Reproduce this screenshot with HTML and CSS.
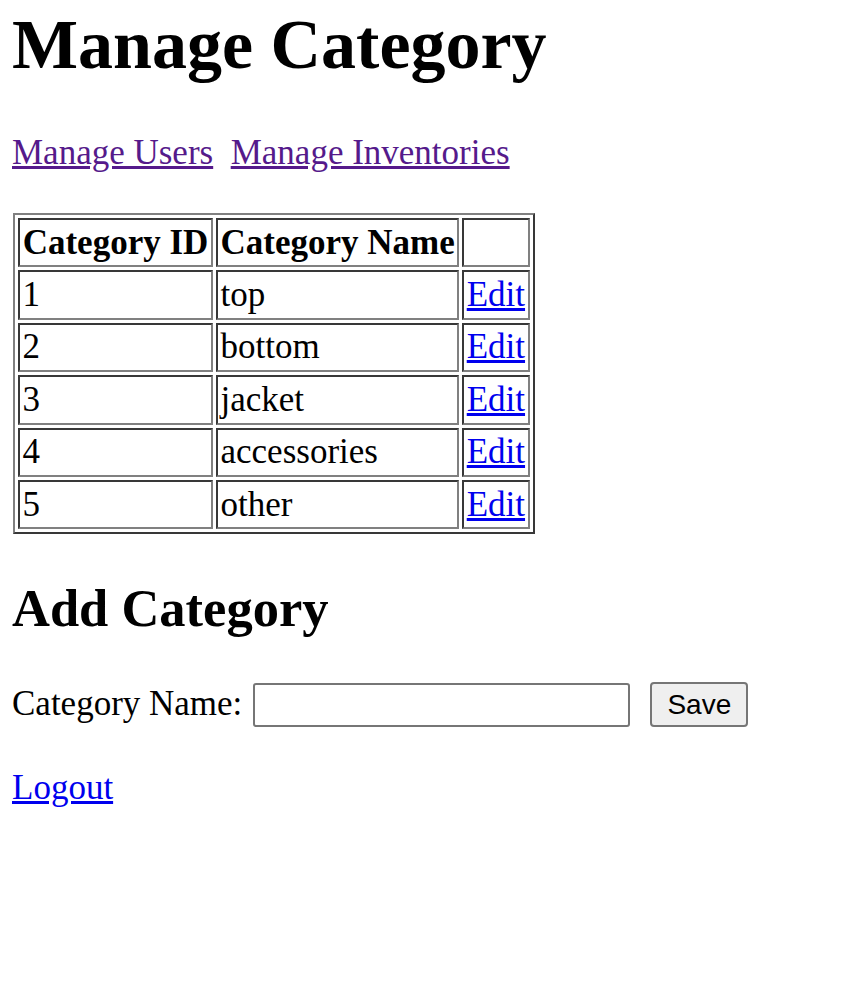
FILE: index.html
```html
<!DOCTYPE html>
<html lang="en">
<head>
<meta charset="utf-8">
<title>Manage Category</title>
<link rel="stylesheet" href="styles.css">
</head>
<body class="page">
<h1 class="title">Manage Category</h1>
<p class="nav"><a class="link link-visited" href="#users">Manage Users</a>&nbsp; <a class="link link-visited" href="#inventories">Manage Inventories</a></p>
<table class="grid">
  <thead>
    <tr>
      <th class="cell head col-id">Category ID</th>
      <th class="cell head col-name">Category Name</th>
      <th class="cell head col-act"></th>
    </tr>
  </thead>
  <tbody>
    <tr><td class="cell">1</td><td class="cell">top</td><td class="cell"><a class="link" href="#edit1">Edit</a></td></tr>
    <tr><td class="cell">2</td><td class="cell">bottom</td><td class="cell"><a class="link" href="#edit2">Edit</a></td></tr>
    <tr><td class="cell">3</td><td class="cell">jacket</td><td class="cell"><a class="link" href="#edit3">Edit</a></td></tr>
    <tr><td class="cell">4</td><td class="cell">accessories</td><td class="cell"><a class="link" href="#edit4">Edit</a></td></tr>
    <tr><td class="cell">5</td><td class="cell">other</td><td class="cell"><a class="link" href="#edit5">Edit</a></td></tr>
  </tbody>
</table>
<h2 class="subtitle">Add Category</h2>
<form class="add-form" onsubmit="return false;">
  <label class="field-label" for="cname">Category Name:</label>
  <input class="field-input" type="text" id="cname" name="cname">
  <button class="save-btn" type="submit">Save</button>
</form>
<p class="footer"><a class="link" href="#logout">Logout</a></p>
</body>
</html>
```
FILE: styles.css
```css
html {
  background: #ffffff;
}

.page {
  margin: 0;
  padding: 5px 12px 0 12px;
  font-family: "Liberation Serif", "Times New Roman", serif;
  font-size: 35px;
  line-height: 42px;
  color: #000000;
}

.title {
  margin: 0 0 47px 0;
  font-size: 70px;
  line-height: 80px;
  font-weight: bold;
}

.nav {
  margin: 0 0 39px 0;
}

.link {
  color: #0000ee;
  text-decoration: underline;
}

.link-visited {
  color: #551a8b;
}

.grid {
  border-collapse: separate;
  border-spacing: 3px;
  border-style: solid;
  border-width: 2px;
  border-color: #808080 #383838 #383838 #808080;
  margin-left: 1px;
}

.cell {
  box-sizing: border-box;
  border-style: solid;
  border-width: 2px;
  border-color: #383838 #808080 #808080 #383838;
  padding: 1.5px 2.5px;
  line-height: 42.4px;
  text-align: left;
  vertical-align: middle;
  white-space: nowrap;
}

.head {
  font-weight: bold;
  text-align: center;
}

.col-id {
  width: 195px;
}

.col-name {
  width: 243px;
}

.col-act {
  width: 68px;
}

.subtitle {
  margin: 44px 0 0 0;
  font-size: 52.5px;
  line-height: 60px;
  font-weight: bold;
}

.add-form {
  display: flex;
  align-items: flex-start;
  margin: 41px 0 0 0;
}

.field-label {
  margin-top: 4px;
  line-height: 42px;
}

.field-input {
  box-sizing: border-box;
  width: 377px;
  height: 44px;
  margin: 4px 0 0 11px;
  padding: 2px 4px;
  border: 2px solid #767676;
  border-radius: 3px;
  background: #ffffff;
  font-family: "Liberation Sans", Arial, sans-serif;
  font-size: 20px;
}

.save-btn {
  box-sizing: border-box;
  width: 98px;
  height: 45px;
  margin: 3px 0 0 20px;
  padding: 0;
  border: 2px solid #767676;
  border-radius: 4px;
  background: #efefef;
  color: #000000;
  font-family: "Liberation Sans", Arial, sans-serif;
  font-size: 28px;
}

.footer {
  margin: 40px 0 0 0;
}
```
